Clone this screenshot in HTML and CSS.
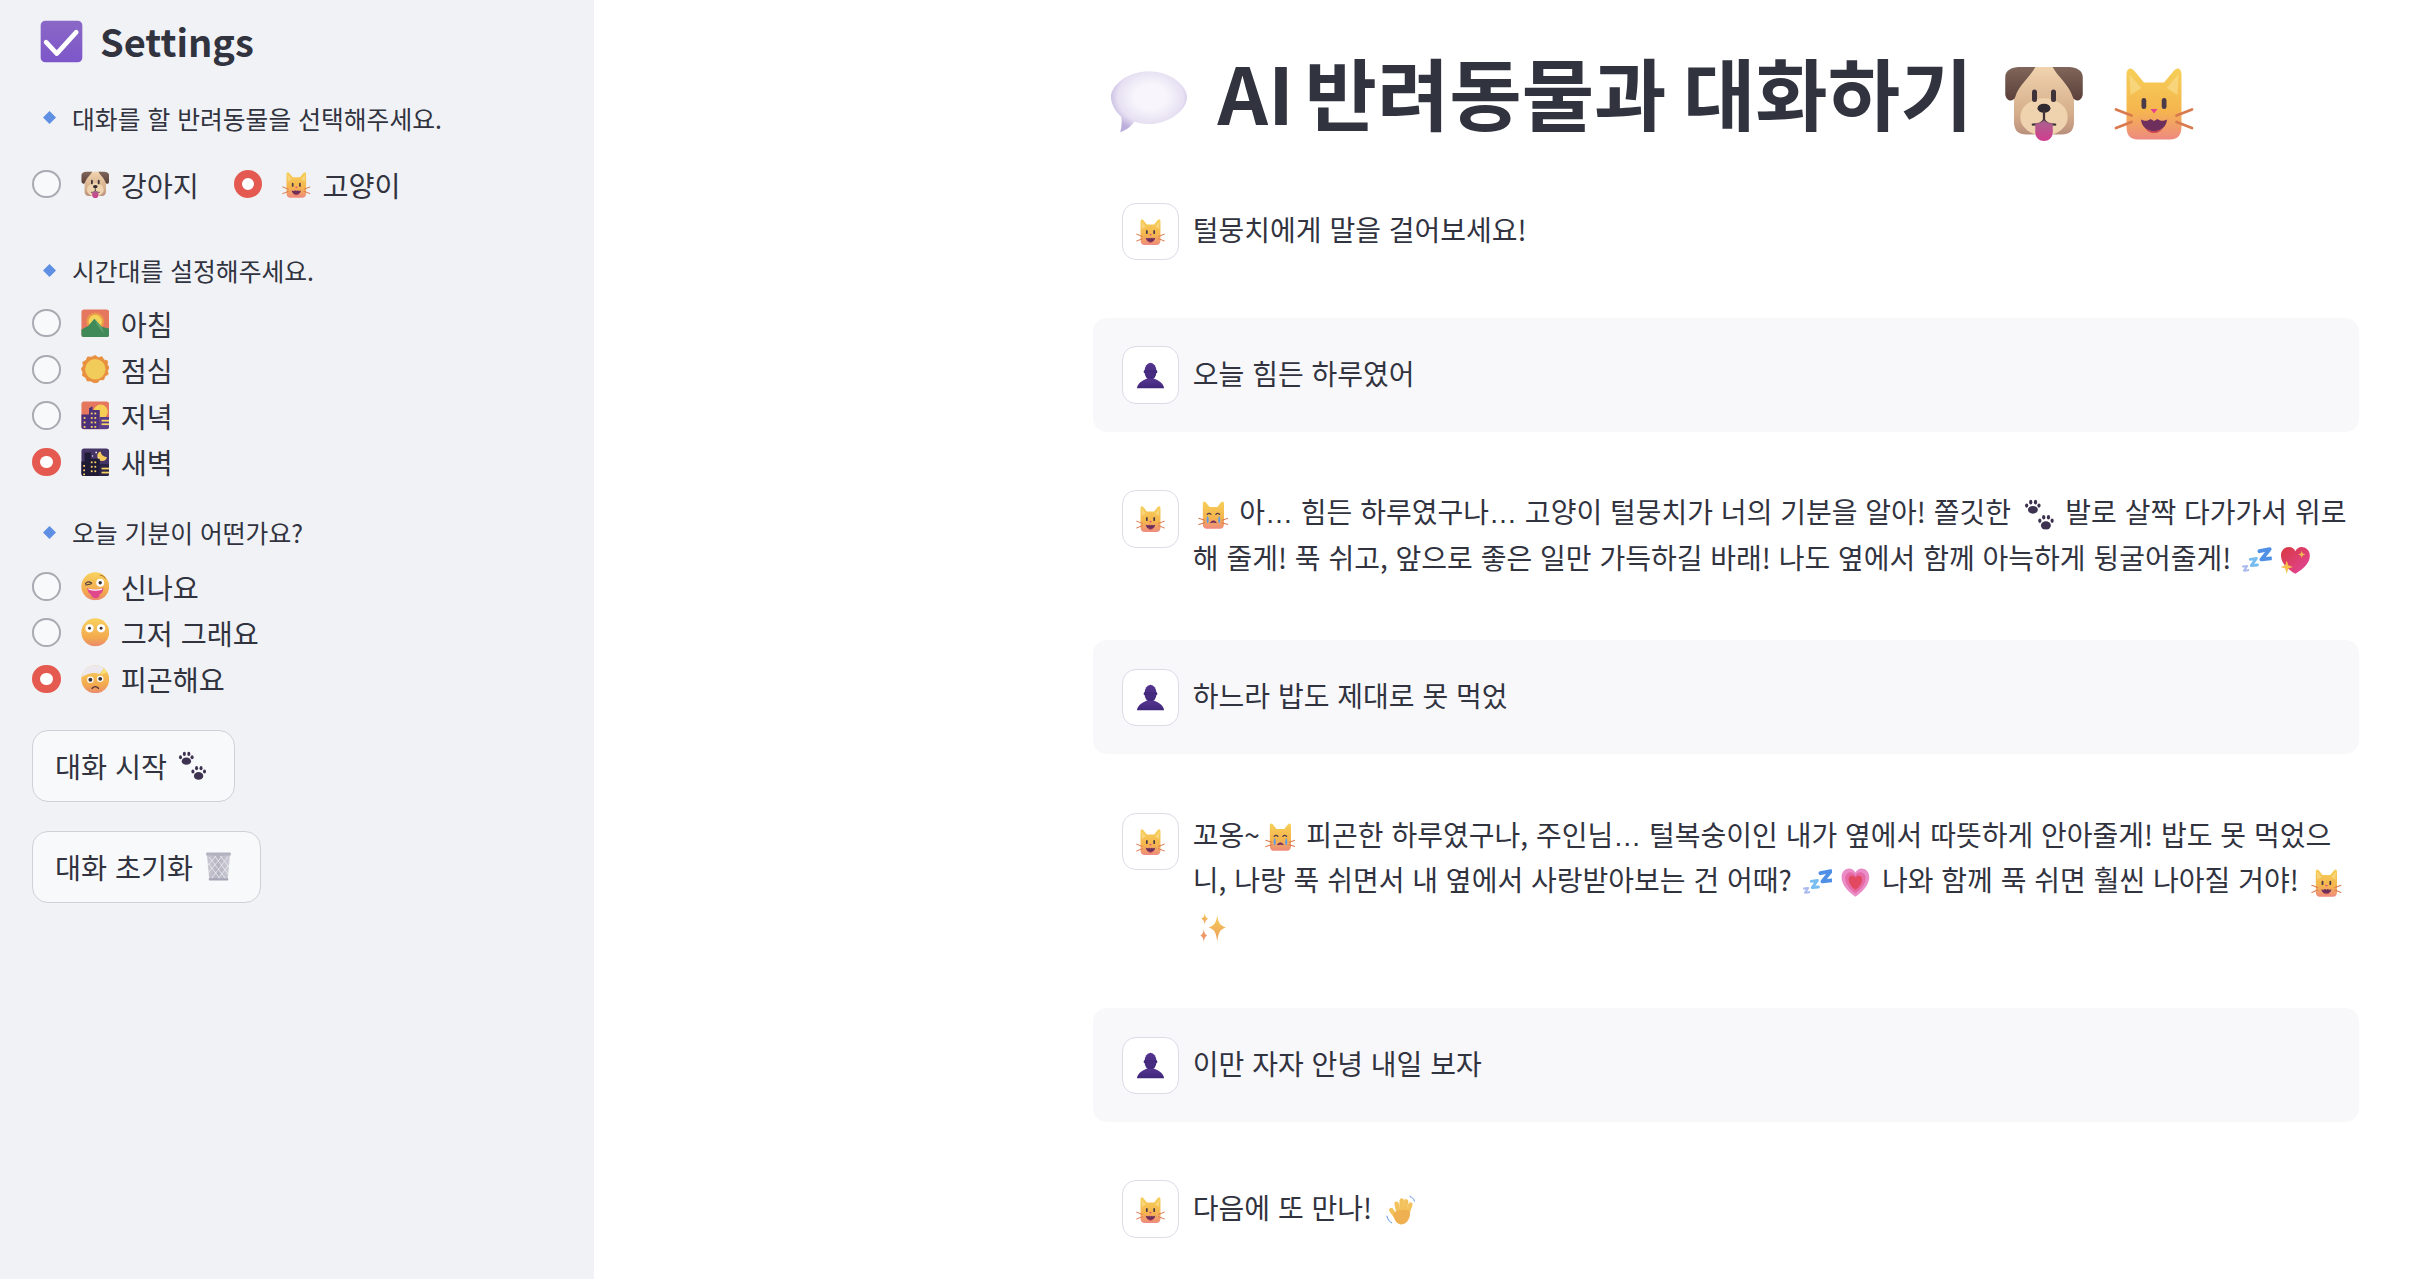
FILE: index.html
```html
<!DOCTYPE html>
<html lang="ko">
<head>
  <meta charset="UTF-8" />
  <meta name="viewport" content="width=device-width, initial-scale=1.0"/>
  <title>AI 반려동물과 대화하기</title>
  <link rel="stylesheet" href="styles.css">
</head>
<body>
  <!-- emoji sprite: every emoji on the page is a symbol in here -->
  <svg class="sprite" aria-hidden="true">
    <defs>
      <linearGradient id="gCheck" x1="0" y1="0" x2="0" y2="1"><stop offset="0" stop-color="#8a68c6"/><stop offset="1" stop-color="#7d56c9"/></linearGradient>
      <linearGradient id="gDog" x1="0" y1="0" x2="0" y2="1"><stop offset="0" stop-color="#f0d3ae"/><stop offset="0.7" stop-color="#d5ad8b"/><stop offset="1" stop-color="#b98f7c"/></linearGradient>
      <linearGradient id="gEar" x1="0" y1="0" x2="0" y2="1"><stop offset="0" stop-color="#80655a"/><stop offset="1" stop-color="#5a4039"/></linearGradient>
      <linearGradient id="gTongue" x1="0" y1="0" x2="0" y2="1"><stop offset="0" stop-color="#a8638f"/><stop offset="1" stop-color="#d23d8e"/></linearGradient>
      <linearGradient id="gCat" x1="0" y1="0" x2="0" y2="1"><stop offset="0" stop-color="#f6cf58"/><stop offset="0.6" stop-color="#f5b54e"/><stop offset="1" stop-color="#ee8a80"/></linearGradient>
      <linearGradient id="gFace" x1="0" y1="0" x2="0" y2="1"><stop offset="0" stop-color="#f8d25e"/><stop offset="0.7" stop-color="#f3a94e"/><stop offset="1" stop-color="#e98a6e"/></linearGradient>
      <radialGradient id="gBalloon" cx="0.52" cy="0.42" r="0.58"><stop offset="0.35" stop-color="#f8f6fc"/><stop offset="0.75" stop-color="#e6e0f2"/><stop offset="1" stop-color="#bcaedb"/></radialGradient>
      <linearGradient id="gBin" x1="0" y1="0" x2="1" y2="0"><stop offset="0" stop-color="#c9c8d2"/><stop offset="0.5" stop-color="#b4b3c0"/><stop offset="1" stop-color="#cfced8"/></linearGradient>
      <linearGradient id="gHeart" x1="0" y1="0" x2="1" y2="1"><stop offset="0" stop-color="#d8393f"/><stop offset="1" stop-color="#e2459f"/></linearGradient>
      <linearGradient id="gBust" x1="0" y1="0" x2="0" y2="1"><stop offset="0" stop-color="#55358f"/><stop offset="1" stop-color="#40277a"/></linearGradient>
      <linearGradient id="gSpark" x1="0" y1="0" x2="0" y2="1"><stop offset="0" stop-color="#f8cf5e"/><stop offset="1" stop-color="#ec9a5a"/></linearGradient>
    </defs>

    <symbol id="check" viewBox="0 0 32 32">
      <rect x="0.5" y="0.5" width="31" height="31" rx="3.5" fill="url(#gCheck)"/>
      <path d="M4.5 16.5 L12.5 25 L27 9" fill="none" stroke="#fff" stroke-width="3.4" stroke-linecap="round" stroke-linejoin="round"/>
    </symbol>

    <symbol id="dog" viewBox="0 0 32 32">
      <path d="M4 8 Q4 2 10 2 H22 Q28 2 28 8 V24 Q28 29 23 29 H9 Q4 29 4 24Z" fill="url(#gDog)"/>
      <ellipse cx="16" cy="22" rx="9.5" ry="7.5" fill="#efd3ae"/>
      <path d="M6 2 H12.5 C10.5 6 6 9 4.5 14 C3.8 16 1 16 0.5 13 V6 C0.5 3.5 3 2 6 2Z" fill="url(#gEar)"/>
      <path d="M26 2 H19.5 C21.5 6 26 9 27.5 14 C28.2 16 31 16 31.5 13 V6 C31.5 3.5 29 2 26 2Z" fill="url(#gEar)"/>
      <rect x="11.2" y="11" width="2" height="5" rx="1" fill="#3f3339"/>
      <rect x="18.8" y="11" width="2" height="5" rx="1" fill="#3f3339"/>
      <ellipse cx="16" cy="18.5" rx="2.6" ry="1.8" fill="#2f2a30"/>
      <path d="M16 19.5 V23 M11.5 25 C13.5 25 15.5 24.5 16 23 C16.5 24.5 18.5 25 20.5 25" fill="none" stroke="#3f3339" stroke-width="0.9" stroke-linecap="round"/>
      <path d="M12.5 24.6 C14 24.6 15.5 24 16 23.2 C16.5 24 18 24.6 19.5 24.6 V28 C19.5 32.8 12.5 32.8 12.5 28Z" fill="url(#gTongue)"/>
    </symbol>

    <symbol id="cat" viewBox="0 0 32 32">
      <path d="M5 5 C5 2.6 6.6 1.8 8 3.4 L12 8.2 H20 L24 3.4 C25.4 1.8 27 2.6 27 5 V26 C27 29.6 25 31 22.6 31 H9.4 C7 31 5 29.6 5 26Z" fill="url(#gCat)"/>
      <path d="M6.2 5 L11 10.4 L6.6 13.2Z" fill="#f9dc8a" opacity="0.7"/>
      <path d="M25.8 5 L21 10.4 L25.4 13.2Z" fill="#f9dc8a" opacity="0.7"/>
      <rect x="11" y="14.4" width="1.9" height="4.4" rx="0.95" fill="#4a3a4a"/>
      <rect x="19.1" y="14.4" width="1.9" height="4.4" rx="0.95" fill="#4a3a4a"/>
      <path d="M14.6 18.8 H17.4 L16 20.6Z" fill="#e4408c"/>
      <path d="M10.8 23 C12.8 24 13.6 23.4 14.6 22.8 L16 23.6 L17.4 22.8 C18.4 23.4 19.2 24 21.2 23 C20.8 29.2 11.2 29.2 10.8 23Z" fill="#6e2f5c"/>
      <path d="M12.4 26.5 C14 28 18 28 19.6 26.5 C18 29 14 29 12.4 26.5Z" fill="#c9434f"/>
      <path d="M0.8 19 L7 21.4 M0.8 26.4 L7 24 M31.2 19 L25 21.4 M31.2 26.4 L25 24" stroke="#d97a4e" stroke-width="1.1" stroke-linecap="round"/>
    </symbol>

    <symbol id="catcry" viewBox="0 0 32 32">
      <path d="M5 5 C5 2.6 6.6 1.8 8 3.4 L12 8.2 H20 L24 3.4 C25.4 1.8 27 2.6 27 5 V26 C27 29.6 25 31 22.6 31 H9.4 C7 31 5 29.6 5 26Z" fill="url(#gCat)"/>
      <path d="M9.5 16 Q11.5 14 13.5 16 M18.5 16 Q20.5 14 22.5 16" fill="none" stroke="#4a3a4a" stroke-width="1.3" stroke-linecap="round"/>
      <path d="M13 24.5 Q16 21 19 24.5 Q16 23.6 13 24.5Z" fill="#6e2f5c" stroke="#6e2f5c"/>
      <path d="M10 17.5 C8.6 20 8.6 24 10 25.6 C11.6 24 11.6 20 10 17.5Z M22 17.5 C20.6 20 20.6 24 22 25.6 C23.6 24 23.6 20 22 17.5Z" fill="#5f9ce8"/>
      <path d="M0.8 20 L7 22 M0.8 26.6 L7 24.6 M31.2 20 L25 22 M31.2 26.6 L25 24.6" stroke="#d97a4e" stroke-width="1.1" stroke-linecap="round"/>
    </symbol>

    <symbol id="balloon" viewBox="0 0 32 32">
      <path d="M16 3 C25 3 31.6 9 31.6 13.5 C31.6 19 24 24.6 16 24.6 C13.6 24.6 11.6 24.2 10 23.6 C8.6 25.6 6.4 27.4 4.2 28 C4.8 25.6 5 23.4 4.6 21.6 C2 19.4 0.4 16 0.4 13.5 C0.4 9 7 3 16 3Z" fill="url(#gBalloon)"/>
    </symbol>

    <symbol id="sunrise" viewBox="0 0 32 32">
      <rect x="0.5" y="0.5" width="31" height="31" rx="3" fill="#e5775f"/>
      <circle cx="16" cy="14" r="10" fill="#ea9a4a"/>
      <circle cx="16" cy="14" r="7.6" fill="#f4d35a"/>
      <path d="M0.5 23 L8 19 L15 11 L23 20 L31.5 22 V28.5 Q31.5 31.5 28.5 31.5 H3.5 Q0.5 31.5 0.5 28.5Z" fill="#3f8a58"/>
      <path d="M15 11 L23 20 L26 28 L18 18Z" fill="#5ea06e"/>
    </symbol>

    <symbol id="sun" viewBox="0 0 32 32">
      <path d="M16 0.6 L19.5 3 L23.6 2 L25.6 5.6 L29.6 6.6 L29.4 10.8 L31.6 14 L29.6 17.6 L30.4 21.6 L26.8 23.6 L25.4 27.6 L21.2 27.6 L18.4 30.8 L14.6 31 L11 29 L7 29 L5.2 25.2 L1.6 23 L2.2 19 L0.4 15.6 L2.6 12 L2 8 L5.8 6 L7.4 2.2 L11.6 2.4Z" fill="#e8903f" stroke="#e8903f" stroke-linejoin="round"/>
      <circle cx="16" cy="16" r="11.4" fill="#f2cc5a"/>
    </symbol>

    <symbol id="dusk" viewBox="0 0 32 32">
      <rect x="0.5" y="0.5" width="31" height="31" rx="3" fill="#e5775f"/>
      <circle cx="22" cy="12" r="8" fill="#f4ce55"/>
      <path d="M9 8 L13 6 V10 H21 V31.5 H3.5 Q0.5 31.5 0.5 28.5 V15 H9Z" fill="#4b3179"/>
      <path d="M21 18 H31.5 V28.5 Q31.5 31.5 28.5 31.5 H21Z" fill="#5a3c8c"/>
      <g fill="#f7d365">
        <rect x="3" y="18" width="2" height="2"/><rect x="3" y="23" width="2" height="2"/><rect x="3" y="28" width="2" height="2"/>
        <rect x="11" y="13" width="2" height="2"/><rect x="15" y="13" width="2" height="2"/><rect x="11" y="18" width="2" height="2"/><rect x="15" y="18" width="2" height="2"/><rect x="11" y="23" width="2" height="2"/><rect x="15" y="23" width="2" height="2"/><rect x="11" y="28" width="2" height="2"/><rect x="15" y="28" width="2" height="2"/>
        <rect x="23" y="21" width="8.5" height="2"/><rect x="23" y="25" width="8.5" height="2"/>
      </g>
    </symbol>

    <symbol id="night" viewBox="0 0 32 32">
      <rect x="0.5" y="0.5" width="31" height="31" rx="3" fill="#463668"/>
      <path d="M22 4 A5.4 5.4 0 1 0 29 10 A6.4 6.4 0 0 1 22 4Z" fill="#f5c95a"/>
      <circle cx="17" cy="5" r="1" fill="#e8e2f2"/><circle cx="13" cy="9" r="0.8" fill="#e8e2f2"/><circle cx="20" cy="11" r="0.8" fill="#e8e2f2"/>
      <path d="M4 5 H11 V12 H21 V31.5 H3.5 Q0.5 31.5 0.5 28.5 V15 H4Z" fill="#1f1a35"/>
      <path d="M21 18 H31.5 V28.5 Q31.5 31.5 28.5 31.5 H21Z" fill="#2b2444"/>
      <g fill="#f7d365">
        <rect x="2.5" y="19" width="2" height="2"/><rect x="2.5" y="24" width="2" height="2"/><rect x="2.5" y="28.5" width="2" height="2"/>
        <rect x="11" y="15" width="2" height="2"/><rect x="15" y="15" width="2" height="2"/><rect x="11" y="20" width="2" height="2"/><rect x="15" y="20" width="2" height="2"/><rect x="11" y="25" width="2" height="2"/><rect x="15" y="25" width="2" height="2"/>
        <rect x="23" y="22" width="8.5" height="2"/><rect x="23" y="26.5" width="8.5" height="2"/>
      </g>
    </symbol>

    <symbol id="zany" viewBox="0 0 32 32">
      <circle cx="16" cy="16" r="15.6" fill="url(#gFace)"/>
      <path d="M5 13 Q8 9.5 12 12.6 M5.4 14.6 L11 13.4" fill="none" stroke="#4a3a3a" stroke-width="1.3" stroke-linecap="round"/>
      <circle cx="21.5" cy="12" r="4.4" fill="#fff"/><circle cx="21.5" cy="12" r="1.9" fill="#3a2f33"/>
      <path d="M21 3.5 Q25.5 3.5 27.5 7.5" fill="none" stroke="#a0663a" stroke-width="1"/>
      <path d="M7 18 Q16 21 25 18 C25 22 23 24 21 25 C21 31 12 31 11 25 C9 24 7 22 7 18Z" fill="#e0488e"/>
      <path d="M8 18.4 Q16 21 24 18.4 L23.4 20 Q16 22 8.6 20Z" fill="#fff"/>
    </symbol>

    <symbol id="flushed" viewBox="0 0 32 32">
      <ellipse cx="16" cy="16" rx="15.6" ry="15.6" fill="url(#gFace)"/>
      <circle cx="9.5" cy="11.5" r="4.6" fill="#fff"/><circle cx="9.5" cy="11.5" r="1.6" fill="#3a2f33"/>
      <circle cx="22.5" cy="11.5" r="4.6" fill="#fff"/><circle cx="22.5" cy="11.5" r="1.6" fill="#3a2f33"/>
    </symbol>

    <symbol id="bandage" viewBox="0 0 32 32">
      <circle cx="16" cy="16" r="15.6" fill="url(#gFace)"/>
      <path d="M1.2 13.4 C1.6 5 9 0.4 16 0.4 C20 0.4 23 1.6 25.6 3.6 L21 10 C14 7.6 8 9.4 1.2 13.4Z" fill="#ece8f0"/>
      <path d="M25.6 3.6 L29 8 L22 11Z" fill="#f8e27a"/>
      <circle cx="10.5" cy="16.5" r="3.6" fill="#fff"/><circle cx="10.5" cy="16.5" r="2.2" fill="#3a2f33"/>
      <circle cx="21.5" cy="15.5" r="3.6" fill="#fff"/><circle cx="21.5" cy="15.5" r="2.2" fill="#3a2f33"/>
      <path d="M12.5 26 Q16 22.4 19.5 26" fill="none" stroke="#4a2f33" stroke-width="1.6" stroke-linecap="round"/>
    </symbol>

    <symbol id="paws" viewBox="2.5 1.5 27 28.5">
      <g fill="#3d3350">
        <ellipse cx="10" cy="11.5" rx="4.6" ry="3.6"/><ellipse cx="4.2" cy="7.6" rx="1.5" ry="2"/><ellipse cx="8" cy="4.4" rx="1.5" ry="2.1"/><ellipse cx="12.4" cy="4.4" rx="1.5" ry="2.1"/><ellipse cx="15.6" cy="7.6" rx="1.5" ry="2"/>
        <ellipse cx="22" cy="26" rx="4.6" ry="3.8"/><ellipse cx="16.4" cy="21.6" rx="1.5" ry="2"/><ellipse cx="20" cy="18.4" rx="1.5" ry="2.1"/><ellipse cx="24.4" cy="18.4" rx="1.5" ry="2.1"/><ellipse cx="27.8" cy="21.6" rx="1.5" ry="2"/>
      </g>
    </symbol>

    <symbol id="bin" viewBox="2 0.5 28 31.5">
      <path d="M3.4 3 H28.6 L26 31 H6Z" fill="url(#gBin)"/>
      <path d="M6 6 L24 30 M12 5 L27 25 M18 5 L27.5 17 M5 13 L18 30 M26 6 L8 30 M20 5 L5 23 M13 5 L4.5 15 M27 15 L15 30" stroke="#f1f0f5" stroke-width="0.8"/>
      <rect x="2.6" y="1" width="26.8" height="3.4" rx="1" fill="#b2b1bf"/>
      <rect x="5.4" y="29" width="21.2" height="2.4" rx="0.8" fill="#a7a6b6"/>
    </symbol>

    <symbol id="bust" viewBox="0 0 32 32">
      <ellipse cx="16" cy="11.5" rx="6.6" ry="9.5" fill="url(#gBust)"/>
      <rect x="8.4" y="10" width="15.2" height="3.6" rx="1.8" fill="#45297f"/>
      <path d="M1 30 C1.6 24.6 7 21.6 11.6 19.6 H20.4 C25 21.6 30.4 24.6 31 30Z" fill="url(#gBust)"/>
    </symbol>

    <symbol id="zzz" viewBox="1 2 30 26">
      <polyline points="19,6 29,4 21,14 30,13" fill="none" stroke="#4f8fe6" stroke-width="3.8" stroke-linejoin="round" stroke-linecap="round"/>
      <polyline points="10,14 16,13 11,20 17,19.5" fill="none" stroke="#77bdf2" stroke-width="2.8" stroke-linejoin="round" stroke-linecap="round"/>
      <polyline points="3,21 7,20.5 4,25 8,24.5" fill="none" stroke="#aab9ee" stroke-width="2" stroke-linejoin="round" stroke-linecap="round"/>
    </symbol>

    <symbol id="heartspark" viewBox="0 1 32 30">
      <path d="M16 30 C6 24 1 18 1 11 C1 5 5.5 2 9.5 2 C12.5 2 15 3.8 16 6.4 C17 3.8 19.5 2 22.5 2 C26.5 2 31 5 31 11 C31 18 26 24 16 30Z" fill="url(#gHeart)"/>
      <path d="M7 16 L8.6 21 L13.4 22.8 L8.6 24.4 L7 30 L5.4 24.4 L0.6 22.8 L5.4 21Z" fill="#f5c14c"/>
      <path d="M22.6 6 L23.5 8.8 L26.4 9.8 L23.5 10.8 L22.6 13.6 L21.7 10.8 L18.8 9.8 L21.7 8.8Z" fill="#f5c14c"/>
    </symbol>

    <symbol id="heartgrow" viewBox="0 0 32 32">
      <path d="M16 31 C6 24 1.6 17 1.6 10.5 C1.6 5 5.6 1.6 9.6 1.6 C12.4 1.6 15 3.4 16 5.8 C17 3.4 19.6 1.6 22.4 1.6 C26.4 1.6 30.4 5 30.4 10.5 C30.4 17 26 24 16 31Z" fill="#ea8cc6"/>
      <path d="M16 27.6 C9 22.4 5.4 17 5.4 11.8 C5.4 7.8 8.2 5.4 11 5.4 C13 5.4 15.2 6.8 16 8.8 C16.8 6.8 19 5.4 21 5.4 C23.8 5.4 26.6 7.8 26.6 11.8 C26.6 17 23 22.4 16 27.6Z" fill="#e66aa6"/>
      <path d="M16 24 C11.4 20.4 9 16.8 9 13 C9 10.4 10.8 8.8 12.6 8.8 C14 8.8 15.4 9.8 16 11.2 C16.6 9.8 18 8.8 19.4 8.8 C21.2 8.8 23 10.4 23 13 C23 16.8 20.6 20.4 16 24Z" fill="#e2485f"/>
    </symbol>

    <symbol id="sparkles" viewBox="0 0 32 32">
      <path d="M20 3 C21 11 23 14 29 16 C23 18 21 21 20 31 C19 21 17 18 11 16 C17 14 19 11 20 3Z" fill="url(#gSpark)"/>
      <path d="M7 1 C7.6 5 8.4 6 11 7 C8.4 8 7.6 9 7 13 C6.4 9 5.6 8 3 7 C5.6 6 6.4 5 7 1Z" fill="url(#gSpark)"/>
      <path d="M6 18 C6.6 22 7.4 23 9.6 24.4 C7.4 25.6 6.6 27 6 31 C5.4 27 4.6 25.6 2.4 24.4 C4.6 23 5.4 22 6 18Z" fill="#ec9a6a"/>
    </symbol>

    <symbol id="wave" viewBox="0 0 32 32">
      <g stroke="#f3c25c" stroke-width="4.6" stroke-linecap="round">
        <path d="M14 18 L12 9"/>
        <path d="M17 17 L17.4 5.6"/>
        <path d="M20.4 17 L22 6.6"/>
        <path d="M23.6 18 L26.4 10"/>
        <path d="M11 22 L6.4 15.6"/>
      </g>
      <path d="M9 19 C12 15 22 14 26 17 C26.6 24 23 30.6 17 30.6 C12.4 30.6 8.6 26 9 19Z" fill="#eeb050"/>
      <path d="M26 1.6 C28.4 2.4 30 4 30.6 6.4 M2 22 C2.6 25 4.4 27.6 7 29" fill="none" stroke="#5f8fe0" stroke-width="1" stroke-linecap="round"/>
    </symbol>

    <symbol id="diamond" viewBox="0 0 12 12">
      <path d="M6 0 L12 6 L6 12 L0 6Z" fill="#5f8fe2"/>
    </symbol>
  </svg>

  <div class="app">
    <aside class="sidebar">
      <h2 class="side-title"><svg class="title-check"><use href="#check"/></svg>Settings</h2>

      <p class="side-label first"><svg class="dia"><use href="#diamond"/></svg>대화를 할 반려동물을 선택해주세요.</p>
      <div class="radio-row">
        <label class="radio"><input type="radio" name="pet"><svg class="emo"><use href="#dog"/></svg>강아지</label>
        <label class="radio"><input type="radio" name="pet" checked><svg class="emo"><use href="#cat"/></svg>고양이</label>
      </div>

      <p class="side-label second"><svg class="dia"><use href="#diamond"/></svg>시간대를 설정해주세요.</p>
      <div class="radio-col">
        <label class="radio"><input type="radio" name="time"><svg class="emo"><use href="#sunrise"/></svg>아침</label>
        <label class="radio"><input type="radio" name="time"><svg class="emo"><use href="#sun"/></svg>점심</label>
        <label class="radio"><input type="radio" name="time"><svg class="emo"><use href="#dusk"/></svg>저녁</label>
        <label class="radio"><input type="radio" name="time" checked><svg class="emo"><use href="#night"/></svg>새벽</label>
      </div>

      <p class="side-label third"><svg class="dia"><use href="#diamond"/></svg>오늘 기분이 어떤가요?</p>
      <div class="radio-col">
        <label class="radio"><input type="radio" name="mood"><svg class="emo"><use href="#zany"/></svg>신나요</label>
        <label class="radio"><input type="radio" name="mood"><svg class="emo"><use href="#flushed"/></svg>그저 그래요</label>
        <label class="radio"><input type="radio" name="mood" checked><svg class="emo"><use href="#bandage"/></svg>피곤해요</label>
      </div>

      <button class="btn btn-start">대화 시작 <svg class="emo"><use href="#paws"/></svg></button>
      <button class="btn btn-reset">대화 초기화 <svg class="emo"><use href="#bin"/></svg></button>
    </aside>

    <main class="main">
      <h1 class="page-title"><svg class="emo balloon"><use href="#balloon"/></svg> <span class="ai">AI</span> 반려동물과 대화하기 <svg class="emo dog"><use href="#dog"/></svg> <svg class="emo kitty"><use href="#cat"/></svg></h1>

      <div class="chat">
        <div class="msg">
          <div class="avatar"><svg><use href="#cat"/></svg></div>
          <div class="text">털뭉치에게 말을 걸어보세요!</div>
        </div>
        <div class="msg user">
          <div class="avatar"><svg><use href="#bust"/></svg></div>
          <div class="text">오늘 힘든 하루였어</div>
        </div>
        <div class="msg">
          <div class="avatar"><svg><use href="#cat"/></svg></div>
          <div class="text"><svg class="emo"><use href="#catcry"/></svg> 아<span class="ell">…</span> 힘든 하루였구나<span class="ell">…</span> 고양이 털뭉치가 너의 기분을 알아! 쫄깃한 <svg class="emo"><use href="#paws"/></svg> 발로 살짝 다가가서 위로해 줄게! 푹 쉬고, 앞으로 좋은 일만 가득하길 바래! 나도 옆에서 함께 아늑하게 뒹굴어줄게! <svg class="emo zz"><use href="#zzz"/></svg> <svg class="emo"><use href="#heartspark"/></svg></div>
        </div>
        <div class="msg user">
          <div class="avatar"><svg><use href="#bust"/></svg></div>
          <div class="text">하느라 밥도 제대로 못 먹었</div>
        </div>
        <div class="msg">
          <div class="avatar"><svg><use href="#cat"/></svg></div>
          <div class="text">꼬옹~<svg class="emo"><use href="#catcry"/></svg> 피곤한 하루였구나, 주인님<span class="ell">…</span> 털복숭이인 내가 옆에서 따뜻하게 안아줄게! 밥도 못 먹었으니, 나랑 푹 쉬면서 내 옆에서 사랑받아보는 건 어때? <svg class="emo zz"><use href="#zzz"/></svg> <svg class="emo"><use href="#heartgrow"/></svg> 나와 함께 푹 쉬면 훨씬 나아질 거야! <svg class="emo"><use href="#cat"/></svg> <svg class="emo"><use href="#sparkles"/></svg></div>
        </div>
        <div class="msg user">
          <div class="avatar"><svg><use href="#bust"/></svg></div>
          <div class="text">이만 자자 안녕 내일 보자</div>
        </div>
        <div class="msg">
          <div class="avatar"><svg><use href="#cat"/></svg></div>
          <div class="text">다음에 또 만나! <svg class="emo"><use href="#wave"/></svg></div>
        </div>
      </div>
    </main>
  </div>
</body>
</html>
```

FILE: styles.css
```css
* {
  box-sizing: border-box;
}

html, body {
  height: 100%;
}

body {
  margin: 0;
  overflow: hidden;
  background: #ffffff;
  color: #31333f;
  font-family: "Noto Sans CJK KR", "Noto Sans", sans-serif;
}

.sprite {
  position: absolute;
  width: 0;
  height: 0;
}

.app {
  display: flex;
  height: 100%;
}

/* sidebar */
.sidebar {
  width: 594px;
  flex: none;
  background: #f0f2f6;
  padding: 0 0 0 32px;
  display: flex;
  flex-direction: column;
  align-items: flex-start;
}

.side-title {
  display: flex;
  align-items: center;
  height: 80px;
  margin: 0 0 0 8px;
  font-size: 38px;
  font-weight: 600;
}

.title-check {
  width: 43px;
  height: 43px;
  margin: 2px 17px 0 0;
}

.side-label {
  display: flex;
  align-items: center;
  height: 44px;
  margin: 0 0 0 11px;
  font-size: 24.8px;
  line-height: 44px;
}

.side-label.first { margin-top: 15.5px; margin-bottom: 21.5px; }
.side-label.second { margin-top: 41px; margin-bottom: 8px; }
.side-label.third { margin-top: 25.5px; margin-bottom: 9px; }

.dia {
  width: 13px;
  height: 13px;
  margin-right: 16px;
}

.radio-row {
  display: flex;
  gap: 35px;
}

.radio-col {
  display: flex;
  flex-direction: column;
  gap: 0.3px;
}

.radio {
  display: flex;
  align-items: center;
  height: 46px;
  font-size: 28.3px;
}

.radio input {
  appearance: none;
  width: 28.6px;
  height: 28.6px;
  margin: 0 20px 0 0;
  border: 2px solid #a9aab2;
  border-radius: 50%;
  background: #f8f9fb;
}

.radio input:checked {
  border: 8.6px solid #e55a50;
  background: #ffffff;
}

.radio .emo {
  width: 28.6px;
  height: 28.6px;
  margin: 0 11.5px 0 0;
}

.btn {
  display: flex;
  align-items: center;
  gap: 11px;
  height: 72px;
  padding: 0 26.5px 2px 22px;
  background: #f8f9fb;
  border: 1.5px solid #d0d1d8;
  border-radius: 16px;
  color: #31333f;
  font-family: inherit;
  font-size: 28.3px;
}

.btn .emo {
  width: 29px;
  height: 29px;
  margin: 0;
}

.btn-start { margin-top: 28.5px; }
.btn-reset { margin-top: 29px; }

/* main column */
.main {
  flex: 1;
  min-width: 0;
  padding: 43.5px 64px 0 499px;
}

.page-title {
  margin: 0 0 32.5px 17px;
  font-size: 78.7px;
  font-weight: 700;
  line-height: 94px;
  word-spacing: -5.5px;
  white-space: nowrap;
}

.ai {
  margin-right: -6px;
}

.page-title .emo {
  width: 80px;
  height: 80px;
  vertical-align: -17px;
}

.page-title .balloon {
  width: 78px;
  height: 78px;
  margin: 0 13px 0 0;
}

.page-title .dog {
  margin: 0 5px 0 14.5px;
}

.page-title .kitty {
  margin: 0 0 0 8.5px;
}

.chat {
  display: flex;
  flex-direction: column;
  gap: 29.5px;
}

.msg {
  display: flex;
  align-items: center;
  gap: 14px;
  padding: 28.6px 8px 28.6px 28.6px;
  border-radius: 14px;
}

.msg.user {
  background: #f8f8fb;
}

.avatar {
  flex: none;
  align-self: flex-start;
  display: flex;
  align-items: center;
  justify-content: center;
  width: 57.2px;
  height: 57.2px;
  background: #ffffff;
  border: 1.5px solid #dcdbe7;
  border-radius: 14px;
}

.avatar svg {
  width: 29px;
  height: 29px;
}

.text {
  flex: 1;
  min-width: 0;
  margin: -1px 0 1px;
  font-size: 28px;
  line-height: 45.8px;
}

/* other font, so it must not stretch the line box */
.ell {
  font-family: "Liberation Sans", sans-serif;
  line-height: 0;
}

/* negative block margins keep the line height fixed around an emoji,
   the +6px on vertical-align cancels the shift they cause */
.emo {
  width: 1.1em;
  height: 1.1em;
  margin: -6px 0.11em -6px 0.17em;
  vertical-align: calc(6px - 0.22em);
}

.emo.zz {
  margin: -6px -0.17em -6px 0.07em;
}
```
